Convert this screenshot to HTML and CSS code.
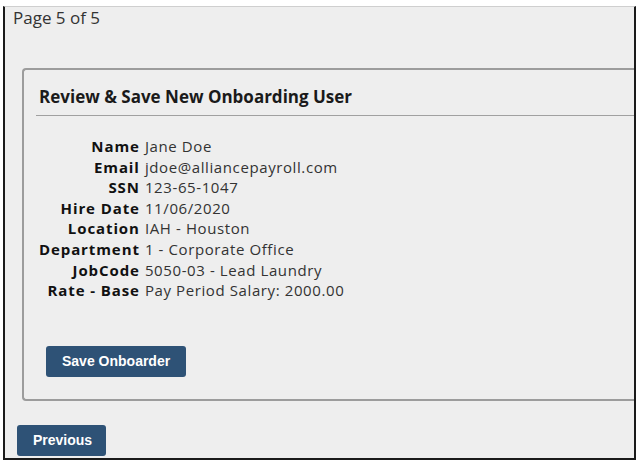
FILE: index.html
```html
<!DOCTYPE html>
<html lang="en">
<head>
<meta charset="UTF-8">
<meta name="viewport" content="width=device-width, initial-scale=1.0">
<title>Review &amp; Save New Onboarding User</title>
<link rel="stylesheet" href="styles.css">
</head>
<body>

<div id="wizard">
  <div class="page-count">Page 5 of 5</div>

  <div class="review-box">
    <h3>Review &amp; Save New Onboarding User</h3>
    <div class="details">
      <span class="lbl">Name</span><span class="val">Jane Doe</span>
      <span class="lbl">Email</span><span class="val">jdoe@alliancepayroll.com</span>
      <span class="lbl">SSN</span><span class="val">123-65-1047</span>
      <span class="lbl">Hire Date</span><span class="val">11/06/2020</span>
      <span class="lbl">Location</span><span class="val">IAH - Houston</span>
      <span class="lbl">Department</span><span class="val">1 - Corporate Office</span>
      <span class="lbl">JobCode</span><span class="val">5050-03 - Lead Laundry</span>
      <span class="lbl">Rate - Base</span><span class="val">Pay Period Salary: 2000.00</span>
    </div>
    <button type="button" class="btn save">Save Onboarder</button>
  </div>

  <button type="button" class="btn prev">Previous</button>
</div>

</body>
</html>
```

FILE: styles.css
```css
body {
  margin: 0;
  background-color: #fff;
  font-family: "Open Sans", "Noto Sans", sans-serif;
  color: #333;
}

#wizard {
  margin: 6px 5px 0 3px;
  height: 454px;
  box-sizing: border-box;
  background-color: #eeeeee;
  border-top: 1px solid #cfcfcf;
  border-left: 2px solid #1a1a1a;
  border-right: 2px solid #1a1a1a;
  border-bottom: 2px solid #1a1a1a;
  padding: 0 0 0 8px;
}

.page-count {
  font-size: 17px;
  line-height: 22px;
}

.review-box {
  margin: 39px 0 0 9px;
  height: 333px;
  box-sizing: border-box;
  border: 2px solid #9c9c9c;
  border-right: none;
  border-radius: 4px 0 0 4px;
  padding: 17px 0 0 14px;
}

.review-box h3 {
  margin: 0 0 0 -2px;
  padding: 0 0 8px 3px;
  font-size: 17px;
  line-height: 20px;
  color: #1a1a1a;
  border-bottom: 1px solid #a0a0a0;
}

.details {
  display: grid;
  grid-template-columns: auto 1fr;
  column-gap: 6px;
  margin: 20px 0 0 1px;
  font-size: 15px;
  line-height: 20.6px;
  letter-spacing: 0.6px;
}

.lbl {
  text-align: right;
  font-weight: bold;
  letter-spacing: 0.9px;
  margin-right: -0.9px;
  color: #111;
}

.btn {
  background-color: #2e5276;
  color: #fff;
  border: none;
  border-radius: 3px;
  font-family: "Liberation Sans", Arial, sans-serif;
  font-weight: bold;
  font-size: 14px;
  line-height: 31px;
  height: 31px;
  padding: 0 16px;
  white-space: nowrap;
  cursor: pointer;
}

.save {
  margin: 45px 0 0 8px;
  width: 140px;
}

.prev {
  margin: 24px 0 0 4px;
  width: 89px;
}
```
